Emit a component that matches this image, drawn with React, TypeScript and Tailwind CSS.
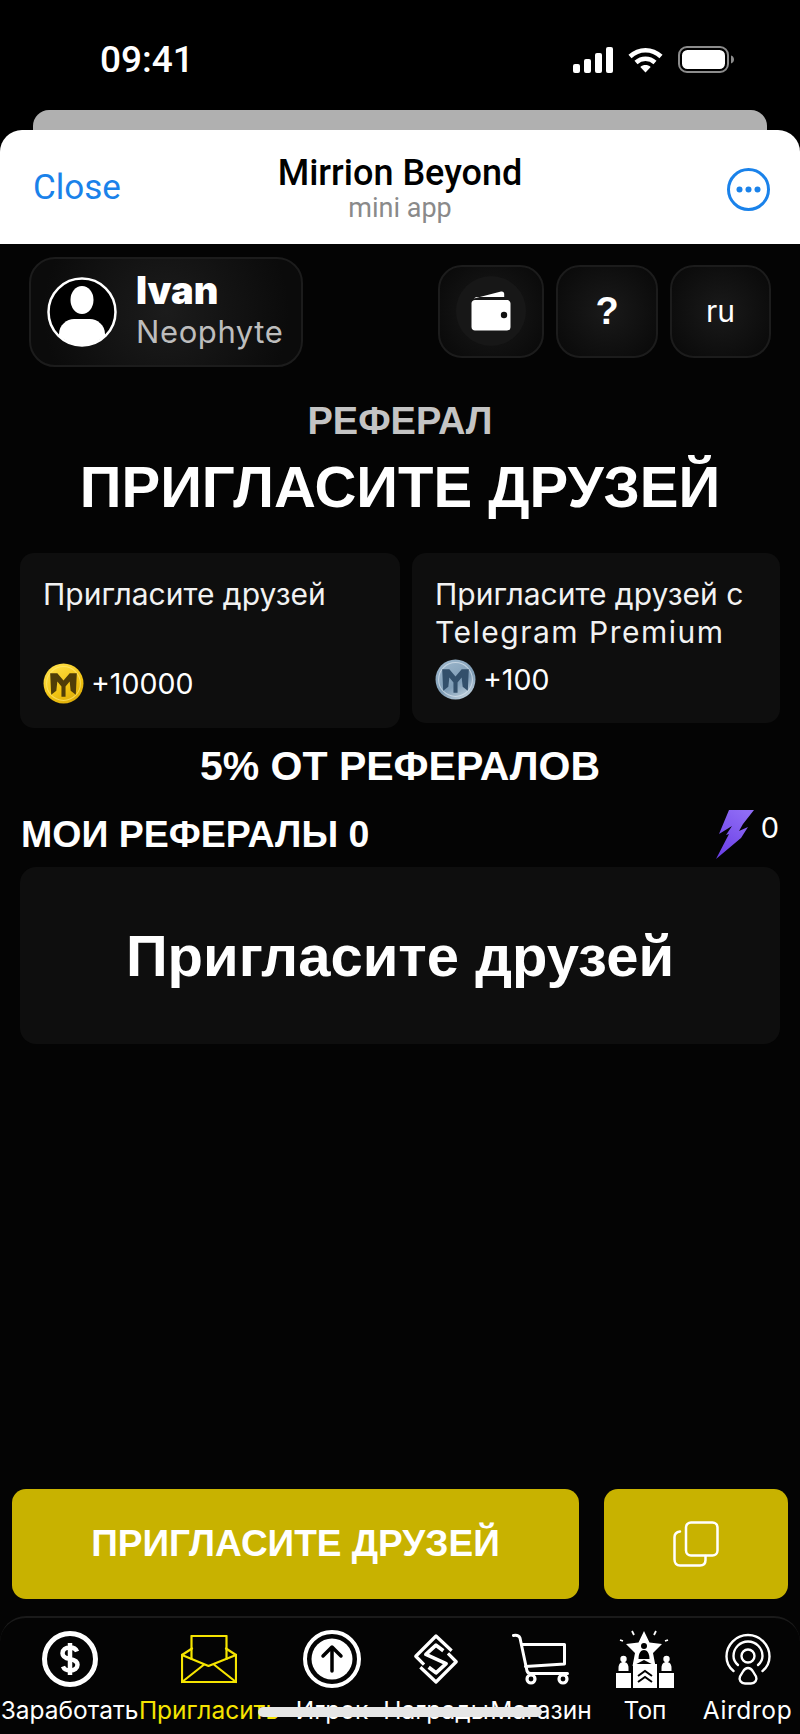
import { ReactNode } from 'react';

const arial = "font-['Liberation_Sans',Arial,sans-serif]";

const Coin = ({ silver = false, id }: { silver?: boolean; id: string }) => (
  <svg width="41" height="41" viewBox="0 0 40 40" className="shrink-0">
    <defs>
      <linearGradient id={id} x1="0.2" y1="0" x2="0.8" y2="1">
        <stop offset="0" stopColor={silver ? '#9db7cc' : '#ffe14a'} />
        <stop offset="0.6" stopColor={silver ? '#7f9db6' : '#f2c413'} />
        <stop offset="1" stopColor={silver ? '#c5d4df' : '#d9a908'} />
      </linearGradient>
    </defs>
    <circle cx="20" cy="20" r="19.5" fill={`url(#${id})`} />
    <circle cx="20" cy="20" r="16.5" fill="none" stroke={silver ? '#dbe6ee' : '#ffe875'} strokeWidth="1" opacity="0.7" />
    <path
      d="M7 10h7l6 7 6-7h7l-1 21-5-4-1-9-4 5v10h-4V23l-4-5-1 9-5 4z"
      fill={silver ? '#33506b' : '#4f3d08'}
    />
  </svg>
);

const NavItem = ({ label, width, active, latin, children }: { label: string; width: string; active?: boolean; latin?: boolean; children: ReactNode }) => (
  <div className={`${width} shrink-0 flex flex-col items-center`}>
    <div className="h-[58px] flex items-center justify-center">{children}</div>
    <span
      className={`mt-[7px] text-[24.5px] leading-[30px] whitespace-nowrap font-['Inter',sans-serif] ${active ? 'text-[#f5e400]' : 'text-white'} ${latin ? 'tracking-[0.6px]' : ''}`}
    >
      {label}
    </span>
  </div>
);

const IconButton = ({ width, children }: { width: string; children: ReactNode }) => (
  <div
    className={`${width} h-[93px] rounded-[24px] border-2 border-[#1c1c1c] flex items-center justify-center bg-[radial-gradient(circle,#1a1a1a_0%,#0b0b0b_85%)]`}
  >
    {children}
  </div>
);

export default function App() {
  return (
    <div className={`w-[800px] h-[1734px] overflow-hidden relative flex flex-col bg-black text-white ${arial}`}>
      {/* status bar */}
      <div className="h-[110px] shrink-0 flex items-start justify-between pl-[100px] pr-[66px] pt-[40px]">
        <span className="font-['Roboto',sans-serif] font-medium text-[37px] leading-[40px]">09:41</span>
        <div className="flex items-center gap-[15px] pt-[6px]">
          <svg width="40" height="26" viewBox="0 0 40 26" fill="#fff">
            <rect x="0" y="17" width="7" height="9" rx="2" />
            <rect x="11" y="12" width="7" height="14" rx="2" />
            <rect x="22" y="6" width="7" height="20" rx="2" />
            <rect x="33" y="0" width="7" height="26" rx="2" />
          </svg>
          <svg width="35" height="26" viewBox="0 0 35 26" fill="none" stroke="#fff" strokeWidth="4.5">
            <path d="M2 9.5C11 1 24 1 33 9.5" />
            <path d="M8 15.5C13.5 10.5 21.5 10.5 27 15.5" />
            <path d="M17.5 25.5l-5.2-5.5c3-2.6 7.4-2.6 10.4 0z" fill="#fff" stroke="none" />
          </svg>
          <svg width="56" height="27" viewBox="0 0 56 27" fill="none">
            <rect x="1" y="1" width="49" height="25" rx="8" stroke="#8c8c8c" strokeWidth="2" />
            <rect x="4" y="4" width="43" height="19" rx="5.5" fill="#fff" />
            <path d="M53 9.5c2 .6 3 2.2 3 4s-1 3.4-3 4z" fill="#8c8c8c" />
          </svg>
        </div>
      </div>

      {/* sheet behind */}
      <div className="mx-[33px] h-[20px] shrink-0 rounded-t-[16px] bg-[#b0b0b0]" />

      {/* telegram header */}
      <div className="h-[114px] shrink-0 rounded-t-[22px] bg-white flex items-center justify-between pl-[33px] pr-[30px] relative">
        <span className="text-[#1a82ea] text-[35px] leading-[40px] mt-[2px] font-['Roboto',sans-serif]">Close</span>
        <div className="absolute left-0 right-0 top-[23px] flex flex-col items-center">
          <span className="text-black text-[36px] leading-[40px] font-medium font-['Roboto',sans-serif]">Mirrion Beyond</span>
          <span className="text-[#8a8a8a] text-[27px] leading-[30px] font-['Roboto',sans-serif]">mini app</span>
        </div>
        <svg width="43" height="43" viewBox="0 0 43 43" className="mt-[4px]">
          <circle cx="21.5" cy="21.5" r="20" fill="none" stroke="#1a82ea" strokeWidth="3" />
          <circle cx="12.5" cy="21.5" r="3" fill="#1a82ea" />
          <circle cx="21.5" cy="21.5" r="3" fill="#1a82ea" />
          <circle cx="30.5" cy="21.5" r="3" fill="#1a82ea" />
        </svg>
      </div>

      {/* page */}
      <div className="flex-1 flex flex-col bg-[#040404]">
        <div className="flex items-center justify-between pt-[13px] pl-[29px] pr-[29px]">
          <div className="w-[274px] h-[110px] rounded-[26px] border-2 border-[#1c1c1c] flex items-center pl-[16px] bg-[radial-gradient(circle,#1c1c1c_0%,#0b0b0b_85%)]">
            <svg width="70" height="70" viewBox="0 0 70 70" className="shrink-0">
              <defs>
                <clipPath id="avatar-clip">
                  <circle cx="35" cy="35" r="33" />
                </clipPath>
              </defs>
              <circle cx="35" cy="35" r="33.5" fill="#000" stroke="#fff" strokeWidth="2.5" />
              <g clipPath="url(#avatar-clip)" fill="#fff">
                <ellipse cx="35" cy="23" rx="11.5" ry="14" />
                <path d="M12 70V57c0-9 8-15 15-15h16c7 0 15 6 15 15v13z" />
              </g>
            </svg>
            <div className="ml-[19px] flex flex-col font-['Inter',sans-serif]">
              <span className="text-[38px] leading-[42px] font-black mt-[-3px]">Ivan</span>
              <span className="text-[31px] leading-[42px] text-[#bdbdbd] tracking-[0.6px]">Neophyte</span>
            </div>
          </div>
          <div className="flex items-center gap-[12px] mb-[2px]">
            <IconButton width="w-[106px]">
              <div className="w-[70px] h-[70px] rounded-full bg-[#171717] flex items-center justify-center">
                <svg width="40" height="40" viewBox="0 0 40 40" fill="#fff">
                  <path d="M3 7.500 30 .500c2-.4 3.200.7 3.200 2.600V6H6.500C4.800 6 3.600 6.600 3 7.500z" />
                  <path d="M4 9h32c2 0 3.500 1.500 3.500 3.500V36c0 2-1.500 3.500-3.500 3.500H4c-2 0-3.500-1.500-3.500-3.500V12.500C.5 10.500 2 9 4 9z" />
                  <circle cx="33" cy="24" r="3.200" fill="#111" />
                </svg>
              </div>
            </IconButton>
            <IconButton width="w-[102px]">
              <span className="text-[38px] font-bold">?</span>
            </IconButton>
            <IconButton width="w-[101px]">
              <span className="text-[30px] font-['Inter',sans-serif]">ru</span>
            </IconButton>
          </div>
        </div>

        <h2 className="mt-[33px] text-center text-[38px] leading-[42px] font-bold text-[#c4c4c4]">РЕФЕРАЛ</h2>
        <h1 className="mt-[12px] text-center text-[58px] leading-[66px] font-bold">ПРИГЛАСИТЕ ДРУЗЕЙ</h1>

        <div className="mt-[33px] px-[20px] flex items-start gap-[12px] font-['Inter',sans-serif]">
          <div className="w-[380px] h-[175px] rounded-[14px] bg-[#0e0e0e] pl-[23px] pt-[22px]">
            <p className="text-[30px] leading-[38px] text-[#f2f2f2]">Пригласите друзей</p>
            <div className="mt-[50px] flex items-center gap-[7px]">
              <Coin id="coin-gold" />
              <span className="text-[28.5px] leading-[40px]">+10000</span>
            </div>
          </div>
          <div className="w-[368px] h-[170px] rounded-[14px] bg-[#0e0e0e] pl-[23px] pt-[22px]">
            <p className="text-[30px] leading-[38px] text-[#f2f2f2] whitespace-nowrap">
              Пригласите друзей с
              <br />
              <span className="tracking-[1.5px]">Telegram Premium</span>
            </p>
            <div className="mt-[8px] flex items-center gap-[7px]">
              <Coin silver id="coin-silver" />
              <span className="text-[28.5px] leading-[40px]">+100</span>
            </div>
          </div>
        </div>

        <h3 className="mt-[16px] text-center text-[41px] leading-[44px] font-bold">5% ОТ РЕФЕРАЛОВ</h3>

        <div className="mt-[14px] pl-[21px] pr-[21px] flex items-start justify-between">
          <span className="mt-[11px] text-[37.5px] leading-[42px] font-bold">МОИ РЕФЕРАЛЫ 0</span>
          <div className="mt-[7px] flex items-start gap-[7px]">
            <svg width="38" height="50" viewBox="0 0 38 50">
              <defs>
                <linearGradient id="bolt" x1="0.7" y1="0" x2="0.2" y2="1">
                  <stop offset="0" stopColor="#8f6cf5" />
                  <stop offset="1" stopColor="#6b3fe6" />
                </linearGradient>
              </defs>
              <path d="M13 1h25L27 15l-4 7 9-4-7 11L0 50l13-25-3 1 6-9-13 8z" fill="url(#bolt)" />
            </svg>
            <span className="mt-[2px] text-[29px] leading-[34px] font-['Inter',sans-serif]">0</span>
          </div>
        </div>

        <div className="mt-[8px] mx-[20px] h-[177px] rounded-[16px] bg-[#0e0e0e] flex items-center justify-center">
          <span className="text-[58px] leading-[66px] font-bold">Пригласите друзей</span>
        </div>

        <div className="flex-1" />

        <div className="pl-[12px] pr-[12px] flex items-stretch justify-between">
          <button className="w-[567px] h-[110px] rounded-[14px] bg-[#c8b200] text-[37px] font-bold text-white">ПРИГЛАСИТЕ ДРУЗЕЙ</button>
          <button className="w-[184px] h-[110px] rounded-[14px] bg-[#c8b200] flex items-center justify-center">
            <svg width="46" height="46" viewBox="0 0 46 46" fill="none" stroke="#fff" strokeWidth="2.5" strokeLinecap="round">
              <rect x="13" y="1.500" width="31.500" height="33" rx="5" />
              <path d="M7 10.500C3.500 11 1.500 13 1.500 16v22.500c0 3.500 2 6 5.500 6h20c3.500 0 5.500-2 5.500-5.500V35" />
            </svg>
          </button>
        </div>

        {/* bottom nav */}
        <div className="mt-[17px] h-[118px] rounded-t-[26px] border-t-2 border-[#1a1a1a] flex pt-[12px] overflow-hidden">
          <NavItem label="Заработать" width="w-[139px]">
            <svg width="58" height="58" viewBox="0 0 58 58" fill="none" stroke="#fff">
              <circle cx="29" cy="29" r="25.500" strokeWidth="5" />
              <path d="M36 21.500c-1-2.500-3.500-4-7-4-4.500 0-7.500 2.200-7.500 5.700s3 5 7.500 5.800 7.500 2.300 7.500 5.800-3 5.700-7.500 5.700c-3.500 0-6-1.500-7-4M29 13v32" strokeWidth="4.500" />
            </svg>
          </NavItem>
          <NavItem label="Пригласить" width="w-[140px]" active>
            <svg width="56" height="49" viewBox="0 0 56 49" fill="none" stroke="#f5e400" strokeWidth="2.200" strokeLinejoin="round" strokeLinecap="round">
              <path d="M1 20v27h54V20L45 13.500M11 13.500 1 20" />
              <path d="M10.500 24V1h35v23" />
              <path d="M1 20l26.500 11L55 20M1 47l21.500-17M55 47 33.500 30" />
            </svg>
          </NavItem>
          <NavItem label="Игрок" width="w-[106px]">
            <svg width="58" height="58" viewBox="0 0 58 58">
              <circle cx="29" cy="29" r="27" fill="none" stroke="#fff" strokeWidth="4" />
              <circle cx="29" cy="29" r="20.500" fill="#fff" />
              <path d="M29 41V18M20 26l9-9 9 9" fill="none" stroke="#000" strokeWidth="3.500" strokeLinecap="round" strokeLinejoin="round" />
            </svg>
          </NavItem>
          <NavItem label="Награды" width="w-[102px]">
            <svg width="46" height="52" viewBox="5 7 50 56" fill="none" stroke="#fff" strokeWidth="3.500" strokeLinejoin="round">
              <path d="M17 41 8 32 30 10 47 26" />
              <path d="M43 29 52 38 30 60 13 44" />
              <path d="M38 26 30 20 19 30 41 40 30 50 22 44" strokeWidth="4" />
            </svg>
          </NavItem>
          <NavItem label="Магазин" width="w-[108px]">
            <svg width="58" height="52" viewBox="0 0 58 52" fill="none" stroke="#fff" strokeWidth="3" strokeLinecap="round" strokeLinejoin="round">
              <path d="M1.500 2.500c3-.5 5.500 0 6.500 2.500l7 33c.5 1.500 1.500 2.500 3.500 2.500h37" />
              <path d="M10 11.500h42.500V31l-39 2.500" />
              <circle cx="19" cy="46" r="4" strokeWidth="3.200" />
              <circle cx="51" cy="46" r="4" strokeWidth="3.200" />
            </svg>
          </NavItem>
          <NavItem label="Топ" width="w-[100px]">
            <svg width="58" height="58" viewBox="0 0 58 58" fill="#fff">
              <path d="M28 1l5.500 11.500L46 14l-9 9 2.500 13L28 30l-11.500 6L19 23l-9-9 12.500-1.500z" />
              <circle cx="28" cy="16" r="3" fill="#000" />
              <path d="M22.500 29c0-6 2.500-9 5.500-9s5.500 3 5.500 9z" fill="#000" />
              <rect x="17" y="34" width="24" height="24" />
              <rect x="0" y="43" width="15" height="15" />
              <rect x="43" y="43" width="15" height="15" />
              <circle cx="7.500" cy="29" r="3.200" />
              <path d="M2.500 41v-3c0-4 2-6 5-6s5 2 5 6v3z" />
              <circle cx="50.500" cy="29" r="3.200" />
              <path d="M45.500 41v-3c0-4 2-6 5-6s5 2 5 6v3z" />
              <path d="M22 46l7-5 7 5M22 52l7-5 7 5" fill="none" stroke="#000" strokeWidth="2" />
              <path d="M16 1l2 4M40 1l-2 4M4 10l3 1M52 10l-3 1" fill="none" stroke="#fff" strokeWidth="1.800" />
            </svg>
          </NavItem>
          <NavItem label="Airdrop" width="w-[105px]" latin>
            <svg width="46" height="52" viewBox="0 0 46 52" fill="none" stroke="#fff" strokeWidth="2.400" strokeLinecap="round">
              <path d="M8.500 38C3.500 34 1.500 29 1.500 23.500a21.500 21.500 0 0 1 43 0c0 5.500-2 10.500-7 14.500" />
              <path d="M13 32c-3-2.500-4.500-5.500-4.500-9a14.500 14.500 0 0 1 29 0c0 3.500-1.500 6.500-4.500 9" />
              <circle cx="23" cy="23" r="6.500" />
              <path d="M23 35c-2 0-3.500 1-5 3.500l-3 5c-1.500 3.500 1 7 5 7h6c4 0 6.500-3.500 5-7l-3-5c-1.500-2.500-3-3.500-5-3.500z" />
            </svg>
          </NavItem>
        </div>
      </div>

      {/* home indicator */}
      <div className="absolute left-[258px] bottom-[17px] w-[284px] h-[10px] rounded-full bg-[#e6e6e6]" />
    </div>
  );
}
